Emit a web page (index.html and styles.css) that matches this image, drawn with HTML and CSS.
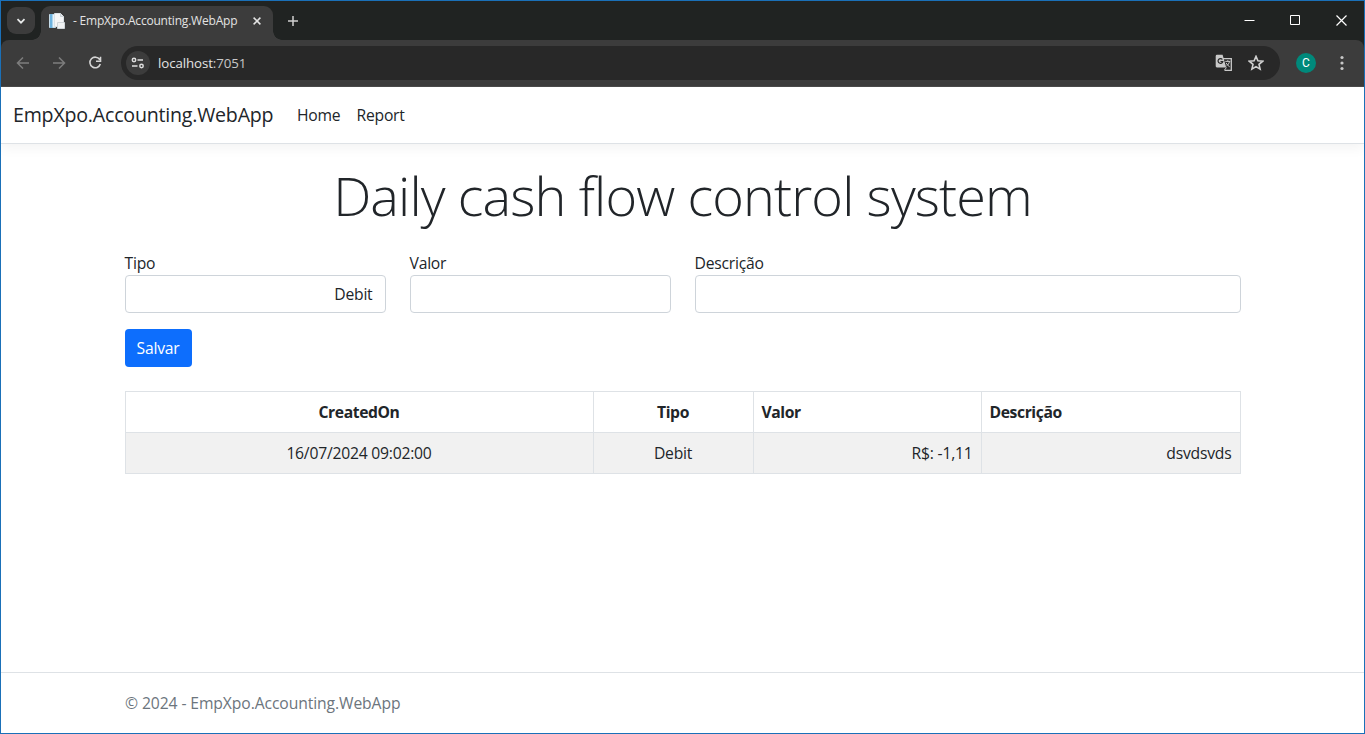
FILE: index.html
```html
<!DOCTYPE html>
<html lang="pt-BR">
<head>
<meta charset="utf-8">
<title>- EmpXpo.Accounting.WebApp</title>
<link rel="stylesheet" href="styles.css">
</head>
<body>
<div class="window">
  <div class="tabstrip">
    <div class="tab-search"><svg width="10" height="10" viewBox="0 0 10 10"><path d="M1.500 3.200 5 6.700 8.500 3.200" fill="none" stroke="#e8eaea" stroke-width="1.700"/></svg></div>
    <div class="tab">
      <svg class="favicon" width="16" height="16" viewBox="0 0 16 16"><path d="M.5 1.500h6v13h-6z" fill="#e9f3f9" stroke="#c5dce9"/><path d="M1 1h2.500v14H1z" fill="#6db3df"/><path d="M5.500 .5h6l3 3v10h-9z" fill="#f5f6f7" stroke="#dbe1e5"/><path d="M11.500 .5v3h3" fill="#e1e6e9" stroke="#c9d0d5"/><path d="M8.500 9.500h7v6h-7z" fill="#f0f2f3" stroke="#cfd5d9"/></svg>
      <span class="tab-title">- EmpXpo.Accounting.WebApp</span>
      <svg class="tab-close" width="8" height="8" viewBox="0 0 8 8"><path d="m.6.6 6.800 6.800m0-6.800L.6 7.400" stroke="#e3e3e3" stroke-width="1.500"/></svg>
    </div>
    <svg class="new-tab" width="10" height="10" viewBox="0 0 10 10"><path d="M5 0v10M0 5h10" stroke="#d0d0d0" stroke-width="1.500"/></svg>
    <div class="window-controls">
      <svg width="11" height="11" viewBox="0 0 11 11"><path d="M.5 5.500h10" stroke="#fff"/></svg>
      <svg width="11" height="11" viewBox="0 0 11 11"><path d="M.5 .5h9v9H.5z" fill="none" stroke="#fff"/></svg>
      <svg width="11" height="11" viewBox="0 0 11 11"><path d="m.5.5 10 10m0-10-10 10" stroke="#fff" stroke-width="1.200"/></svg>
    </div>
  </div>
  <div class="toolbar">
    <svg class="nav-icon" width="14" height="14" viewBox="0 0 14 14"><path d="M13 7H1.500M7 1.500 1.500 7 7 12.500" fill="none" stroke="#7d7d7d" stroke-width="1.500"/></svg>
    <svg class="nav-icon" width="14" height="14" viewBox="0 0 14 14"><path d="M1 7h11.500M7 1.500 12.500 7 7 12.500" fill="none" stroke="#7d7d7d" stroke-width="1.500"/></svg>
    <svg class="nav-icon" width="14" height="14" viewBox="0 0 14 14"><path d="M11.700 3.600A5.300 5.300 0 1 0 12.300 8M12.500 .8v4.400H8" fill="none" stroke="#d5d5d5" stroke-width="1.600"/></svg>
    <div class="omnibox">
      <span class="site-info"><svg width="14" height="12" viewBox="0 0 14 12"><g fill="none" stroke="#dedede" stroke-width="1.500"><circle cx="3" cy="3" r="1.700"/><path d="M6.500 3H12M1 9h5.500"/><circle cx="10.500" cy="9" r="1.700"/></g></svg></span>
      <span class="address">localhost<span class="port">:7051</span></span>
      <svg class="translate" width="18" height="18" viewBox="0 0 18 18"><path d="M7.500 4.700h8.800v11.600H9.500" fill="none" stroke="#c9c9c9" stroke-width="1.300"/><path d="M2 .8h5.600l3.600 12.600H2A1.300 1.300 0 0 1 .7 12V2A1.300 1.300 0 0 1 2 .8z" fill="#c9c9c9"/><path d="M7.400 5.500A2.400 2.400 0 1 0 7.800 7.500H5.500" fill="none" stroke="#282828" stroke-width="1.200"/><path d="M10.300 7.400h5M12.800 6.200v1.200m1.700 0c-.3 2-1.700 3.700-3 4.500m-.4-3c.8 1.700 2 3 3.600 3.900M9.500 16l2-2.500" fill="none" stroke="#c9c9c9"/></svg>
      <svg class="star" width="16" height="16" viewBox="0 0 16 16"><path d="m8 1.400 1.900 4.400 4.800.4L11 9.400l1.100 4.700L8 11.600l-4.100 2.500L5 9.400 1.300 6.200l4.800-.4z" fill="none" stroke="#d0d0d0" stroke-width="1.600"/></svg>
    </div>
    <span class="avatar">C</span>
    <svg class="more" width="4" height="16" viewBox="0 0 4 16"><g fill="#c7c7c7"><circle cx="2" cy="2.500" r="1.600"/><circle cx="2" cy="8" r="1.600"/><circle cx="2" cy="13.500" r="1.600"/></g></svg>
  </div>
  <div class="page">
    <nav class="navbar">
      <a class="brand">EmpXpo.Accounting.WebApp</a>
      <a class="nav-link home">Home</a>
      <a class="nav-link report">Report</a>
    </nav>
    <main class="container">
      <h1 class="title">Daily cash flow control system</h1>
      <form class="form-row">
        <label class="field"><span class="label">Tipo</span><span class="control">Debit</span></label>
        <label class="field"><span class="label">Valor</span><span class="control"></span></label>
        <label class="field"><span class="label">Descrição</span><span class="control"></span></label>
      </form>
      <button class="save" type="button">Salvar</button>
      <table class="table">
        <colgroup><col class="col-date"><col class="col-type"><col class="col-value"><col class="col-desc"></colgroup>
        <thead><tr><th class="center">CreatedOn</th><th class="center">Tipo</th><th>Valor</th><th>Descrição</th></tr></thead>
        <tbody><tr><td class="center">16/07/2024 09:02:00</td><td class="center">Debit</td><td class="right">R$: -1,11</td><td class="right">dsvdsvds</td></tr></tbody>
      </table>
    </main>
    <footer class="footer"><span class="copyright">© 2024 - EmpXpo.Accounting.WebApp</span></footer>
  </div>
</div>
</body>
</html>
```
FILE: styles.css
```css
*{box-sizing:border-box}
body{margin:0;font-family:"Open Sans","Noto Sans",sans-serif;font-size:15.7px;letter-spacing:-.22px;line-height:24px;color:#212529;background:#fff}
svg{display:block;flex:none}
.window{height:734px;display:flex;flex-direction:column;border:1px solid #1a70b8;background:#202322;overflow:hidden}
.tabstrip{height:39px;flex:none;display:flex;align-items:center;padding-left:6px;background:#202322}
.tab-search{width:28px;height:27px;border-radius:9px;background:#3c3c3c;display:flex;align-items:center;justify-content:center}
.tab{position:relative;align-self:flex-end;width:232px;height:34px;margin-left:6px;padding:0 12px 4px 8px;display:flex;align-items:center;background:#3c3c3c;border-radius:9px 9px 0 0;color:#e3e3e3;font-size:12px}
.tab::before,.tab::after{content:"";position:absolute;bottom:0;width:9px;height:9px}
.tab::before{left:-9px;background:radial-gradient(circle at 0 0,#202322 8.5px,#3c3c3c 9px)}
.tab::after{right:-9px;background:radial-gradient(circle at 100% 0,#202322 8.5px,#3c3c3c 9px)}
.tab-title{margin-left:8px;white-space:nowrap;letter-spacing:-.2px}
.tab-close{margin-left:auto}
.new-tab{margin-left:15px}
.window-controls{display:flex;gap:35px;margin-left:auto;padding-right:17px}
.toolbar{height:47px;flex:none;display:flex;align-items:center;padding:0 20px 0 15px;background:#3c3c3c;border-bottom:1px solid #4a4a4a;border-radius:8px 8px 0 0}
.nav-icon{margin-right:22px}
.nav-icon:nth-child(3){margin-right:19px}
.omnibox{flex:1;height:34px;margin-right:16px;padding:0 16px 0 5px;display:flex;align-items:center;border-radius:17px;background:#282828}
.site-info{width:24px;height:24px;border-radius:50%;background:#3c3c3c;display:flex;align-items:center;justify-content:center}
.address{margin-left:8px;font-size:13.3px;color:#e3e3e3;letter-spacing:-.1px}
.port{color:#c7c7c7}
.translate{margin-left:auto}
.star{margin-left:15px}
.avatar{width:20px;height:20px;border-radius:50%;background:#00897b;color:#fff;font:12px/20px Roboto,sans-serif;letter-spacing:0;text-align:center}
.more{margin-left:24px}
.page{flex:1;display:flex;flex-direction:column;background:#fff}
.navbar{height:57px;flex:none;display:flex;align-items:center;padding:0 12px;border-bottom:1px solid #dee2e6;box-shadow:0 4px 12px rgba(0,0,0,.05)}
.brand{width:260px;font-size:19.6px;letter-spacing:-.21px;line-height:30px;margin-right:24px;white-space:nowrap}
.home{margin-right:16px}
.container{width:1140px;margin:0 auto;padding:13px 12px 0;flex:1}
.title{margin:0;height:76px;text-align:center;font-weight:300;font-size:54px;letter-spacing:-.88px;line-height:76px;white-space:nowrap}
.form-row{display:grid;grid-template-columns:261px 261px 546px;gap:24px;margin-top:18px}
.field{display:flex;flex-direction:column}
.control{height:38px;padding:6px 12px;border:1px solid #ced4da;border-radius:4px;text-align:right}
.save{display:block;height:38px;width:67px;margin:16px 0 24px;padding:0;border:0;border-radius:4px;background:#0d6efd;color:#fff;font:inherit;letter-spacing:-.22px}
.table{width:1116px;table-layout:fixed;border-collapse:collapse}
.col-date{width:468px}
.col-type{width:160px}
.col-value{width:228px}
th,td{height:41px;padding:8px;border:1px solid #dee2e6;line-height:24px;text-align:left}
th{letter-spacing:-.4px}
td{background:#f1f1f1}
.center{text-align:center}
.right{text-align:right}
.footer{height:61px;flex:none;border-top:1px solid #dee2e6;padding:0 124px;color:#6c757d;line-height:60px}
.copyright{letter-spacing:-.1px}
```
